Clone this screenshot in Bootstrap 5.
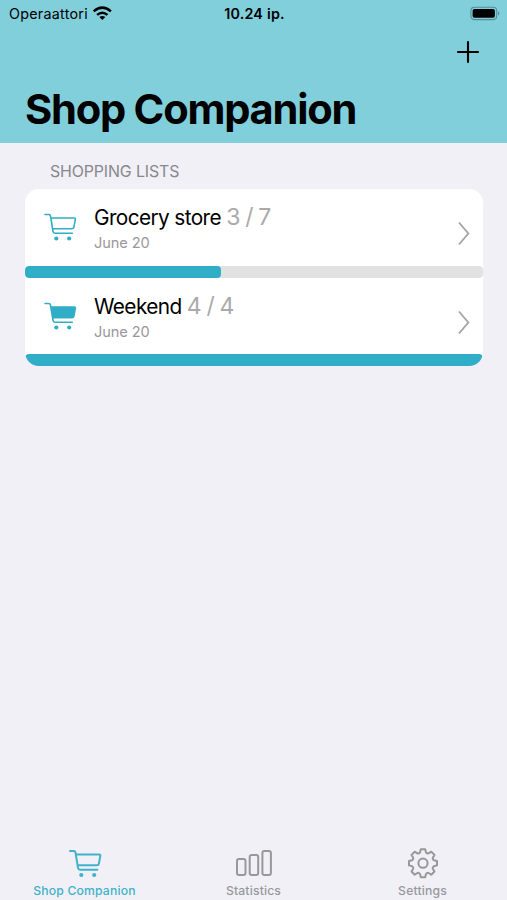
<!DOCTYPE html>
<html lang="en">
<head>
<meta charset="utf-8">
<meta name="viewport" content="width=device-width, initial-scale=1">
<title>Shop Companion</title>
<link href="https://cdn.jsdelivr.net/npm/bootstrap@5.3.0/dist/css/bootstrap.min.css" rel="stylesheet">
<style>
body{font-family:Inter,"Liberation Sans",sans-serif;background:#f0f0f6;color:#000;--teal:#30aec7}
svg{display:block;flex:none;overflow:visible}
.screen{height:100vh;min-height:900px}
.app-head{background:#82cfdc;height:143px}
.status{height:28px;padding:0 7px 0 9px;font-size:14.3px;line-height:28px}
.status>*{flex:1 1 0}
.status .carrier{letter-spacing:.27px}
.status .clock{font-weight:600;letter-spacing:.22px}
.add-row{height:50px;padding:13px 28px 0 0}
.app-title{font-size:41.6px;font-weight:700;line-height:50px;letter-spacing:-1.22px;margin:6px 0 0 25px}
.section-label{font-size:15.9px;line-height:20px;color:#88888d;letter-spacing:-.12px;margin:19px 0 7px 50px;font-weight:400}
.lists{margin:0 24.5px 0 25px;border-radius:14px}
.list-row{height:76.5px;padding:0 13px 0 19px}
.list-row .texts{margin-left:18px;padding-top:14px}
.name{font-size:20.8px;line-height:28px;letter-spacing:-.6px}
.count{font-size:23px;color:#aaa;letter-spacing:-.85px}
.date{font-size:14.6px;line-height:20px;color:#98989a;margin-top:1px;letter-spacing:-.1px}
.list-bar{height:12.2px;border-radius:4px;background:#e2e2e2}
.list-bar .progress-bar{background:var(--teal);border-radius:4px}
.tabs{height:55px;font-size:12.2px;font-weight:500;color:#98989c}
.tabs .nav-link{color:inherit;padding:0;line-height:15px;letter-spacing:.16px}
.tabs .nav-link.active{color:#42b2ca}
.tab-icon{height:38px;padding-top:4px}
</style>
</head>
<body>
<svg width="0" height="0" class="position-absolute" aria-hidden="true">
<defs>
<g id="cart-frame"><path d="M1 1.5H4.9Q6.2 1.5 6.5 3L9 18.4Q9.3 20.2 11 20.2H28.3" fill="none" stroke="currentColor" stroke-linecap="round"/><circle cx="12.3" cy="25.5" r="2.1" fill="currentColor"/><circle cx="25.2" cy="25.5" r="2.1" fill="currentColor"/></g>
<path id="cart-basket" d="M6.9 5H30.2Q31.6 5 31.3 6.4L29.9 14.2Q29.6 15.8 27.8 15.8H8.7" stroke="currentColor" stroke-linejoin="round"/>
</defs>
</svg>
<div class="screen d-flex flex-column">
<header class="app-head">
<div class="status d-flex align-items-center">
<div class="d-flex align-items-center"><span class="carrier">Operaattori</span>
<svg class="ms-1" width="20" height="14" viewBox="0 0 20 14" fill="none" stroke="#000" stroke-width="2.5"><g transform="translate(.3 -.6)"><path d="M1.4 5Q10-2.6 18.6 5M4.8 8.5Q10 4.1 15.2 8.5"/><path d="M7 10.7Q10 8.3 13 10.7L10 13.7Z" fill="#000" stroke="none"/></g></svg></div>
<div class="clock text-center">10.24 ip.</div>
<div class="d-flex justify-content-end"><svg width="30" height="14" viewBox="0 0 30 14"><rect x=".9" y=".2" width="25.8" height="12.4" rx="3.5" fill="none" stroke="#558d98" stroke-width="1.1"/><rect x="2.6" y="2" width="22.3" height="8.8" rx="1.8"/><path d="M28 4.2Q31 6.4 28 8.6Z" fill="#558d98"/></svg></div>
</div>
<div class="add-row d-flex justify-content-end"><svg width="22" height="22" viewBox="0 0 22 22" stroke="#000" stroke-width="2.1" stroke-linecap="round"><path d="M11 1V21M1 11H21"/></svg></div>
<h1 class="app-title">Shop Companion</h1>
</header>
<main class="flex-grow-1">
<h2 class="section-label">SHOPPING LISTS</h2>
<div class="lists bg-white overflow-hidden">
<div class="list-row d-flex">
<svg style="color:#30aec7" class="align-self-center" width="32" height="28" viewBox="0 0 32 28" stroke-width="1.6"><use href="#cart-frame"/><use href="#cart-basket" fill="none"/></svg>
<div class="texts flex-grow-1"><div class="name">Grocery store <span class="count">3 / 7</span></div><div class="date">June 20</div></div>
<svg class="mt-auto mb-auto" width="13" height="24" viewBox="0 0 13 24"><path d="M2 1L11.3 12 2 23" transform="translate(0 6.5)" fill="none" stroke="#a6a6a8" stroke-width="1.9"/></svg>
</div>
<div class="progress list-bar"><div class="progress-bar" style="width:42.857%"></div></div>
<div class="list-row d-flex">
<svg style="color:#30aec7" class="align-self-center" width="32" height="28" viewBox="0 0 32 28" stroke-width="1.6"><use href="#cart-frame"/><use href="#cart-basket" fill="currentColor"/></svg>
<div class="texts flex-grow-1"><div class="name">Weekend <span class="count">4 / 4</span></div><div class="date">June 20</div></div>
<svg class="mt-auto mb-auto" width="13" height="24" viewBox="0 0 13 24"><path d="M2 1L11.3 12 2 23" transform="translate(0 6.5)" fill="none" stroke="#a6a6a8" stroke-width="1.9"/></svg>
</div>
<div class="progress list-bar"><div class="progress-bar" style="width:100%"></div></div>
</div>
</main>
<nav class="tabs nav nav-fill flex-nowrap">
<a class="nav-link active flex-fill w-100" href="#"><div class="tab-icon d-flex justify-content-center"><svg width="32" height="29" viewBox="0 0 32 28" stroke-width="2"><use href="#cart-frame"/><use href="#cart-basket" fill="none"/></svg></div>Shop Companion</a>
<a class="nav-link flex-fill w-100" href="#"><div class="tab-icon d-flex justify-content-center"><svg width="38" height="30" viewBox="0 0 38 30" fill="none" stroke="currentColor" stroke-width="2"><rect x="2" y="10" width="8.5" height="16" rx="2"/><rect x="14.7" y="6" width="8.5" height="20" rx="2"/><rect x="27.4" y="2" width="8.5" height="24" rx="2"/></svg></div>Statistics</a>
<a class="nav-link flex-fill w-100" href="#"><div class="tab-icon d-flex justify-content-center"><svg width="32" height="32" viewBox="-16 -14.2 32 32" fill="none" stroke="currentColor" stroke-width="2" stroke-linejoin="round"><path d="M-2.2-14H2.2L3-10.8Q4.2-9.2 5.5-9.8L8.3-11.5 11.5-8.3 9.8-5.5Q9.2-4.2 10.8-3L14-2.2V2.2L10.8 3Q9.2 4.2 9.8 5.5L11.5 8.3 8.3 11.5 5.5 9.8Q4.2 9.2 3 10.8L2.2 14H-2.2L-3 10.8Q-4.2 9.2-5.5 9.8L-8.3 11.5-11.5 8.3-9.8 5.5Q-9.2 4.2-10.8 3L-14 2.2V-2.2L-10.8-3Q-9.2-4.2-9.8-5.5L-11.5-8.3-8.3-11.5-5.5-9.8Q-4.2-9.2-3-10.8Z"/><circle r="4.6"/></svg></div>Settings</a>
</nav>
</div>
<script src="https://cdn.jsdelivr.net/npm/bootstrap@5.3.0/dist/js/bootstrap.bundle.min.js"></script>
</body>
</html>
